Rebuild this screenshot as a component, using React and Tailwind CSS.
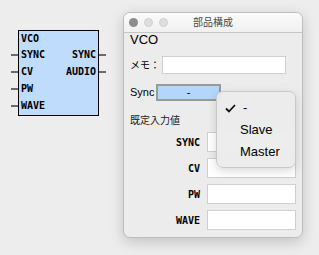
import React from "react";

const mono = { fontFamily: '"DejaVu Sans Mono", monospace' };

function Pin({ side }) {
  return (
    <div
      className={
        "absolute top-1/2 h-[2px] w-[7px] -translate-y-1/2 bg-[#6b6b6b] " +
        (side === "left" ? "left-[-8px]" : "right-[-8px]")
      }
    />
  );
}

function BlockRow({ left, right }) {
  return (
    <div className="relative flex h-[17px] items-center justify-between px-[2px] leading-[17px]">
      {left ? <Pin side="left" /> : null}
      <span>{left}</span>
      <span>{right}</span>
      {right ? <Pin side="right" /> : null}
    </div>
  );
}

function Field({ label }) {
  return (
    <div className="flex h-[20px] items-center">
      <div
        className="w-[77px] pr-[7px] text-right text-[10px] font-bold text-black"
        style={mono}
      >
        {label}
      </div>
      <div className="h-[20px] w-[89px] border border-[#cfcfcf] bg-white" />
    </div>
  );
}

export default function App() {
  return (
    <div
      className="relative h-[255px] w-[319px] overflow-hidden bg-[#ededed]"
      style={{ fontFamily: '"Liberation Sans", "Noto Sans CJK JP", sans-serif' }}
    >
      {/* diagram block */}
      <div
        className="absolute left-[18px] top-[30px] flex h-[86px] w-[81px] flex-col border border-black bg-[#c0dcfd] text-[10px] font-bold text-black"
        style={mono}
      >
        <div className="h-[15px] px-[2px] leading-[15px]">VCO</div>
        <BlockRow left="SYNC" right="SYNC" />
        <BlockRow left="CV" right="AUDIO" />
        <BlockRow left="PW" />
        <BlockRow left="WAVE" />
      </div>

      {/* window */}
      <div className="absolute left-[123px] top-[12px] flex h-[226px] w-[180px] flex-col overflow-hidden rounded-[7px] border border-[#bdbdbd] bg-[#ececec] shadow-[0_4px_14px_rgba(0,0,0,0.18)]">
        <div className="relative flex h-[20px] shrink-0 items-center justify-center border-b border-[#c6c6c6] bg-gradient-to-b from-[#fbfbfb] to-[#f0f0f0]">
          <div className="absolute left-[5px] top-[5px] flex gap-[6px]">
            <div className="h-[9px] w-[9px] rounded-full bg-[#8d8d8d]" />
            <div className="h-[9px] w-[9px] rounded-full border border-[#cfcfcf] bg-[#dedede]" />
            <div className="h-[9px] w-[9px] rounded-full border border-[#cfcfcf] bg-[#dedede]" />
          </div>
          <span className="text-[10px] text-[#4a4a4a]">部品構成</span>
        </div>

        <div className="flex flex-col pl-[6px]">
          <div className="h-[14px] text-[13px] leading-[14px] text-black">VCO</div>

          <div className="mt-[9px] flex h-[18px] items-center">
            <span className="w-[32px] text-[10px] text-black">メモ：</span>
            <div className="h-[18px] w-[124px] border border-[#cfcfcf] bg-white" />
          </div>

          <div className="mt-[10px] flex h-[17px] items-center">
            <span className="w-[26px] text-[11px] text-black">Sync</span>
            <div className="flex h-[17px] w-[65px] items-center justify-center border-2 border-[#9a9a9a] bg-[#b3d6fd] text-[11px] text-black">
              -
            </div>
          </div>

          <div className="mt-[13px] h-[14px] text-[10px] leading-[14px] text-[#222]">
            既定入力値
          </div>

          <div className="mt-[4px] flex flex-col gap-[6px]">
            <Field label="SYNC" />
            <Field label="CV" />
            <Field label="PW" />
            <Field label="WAVE" />
          </div>
        </div>
      </div>

      {/* popup menu */}
      <div className="absolute left-[216px] top-[91px] flex h-[77px] w-[80px] flex-col rounded-[7px] border border-[#c9c9c9] bg-[#ececec]/95 pt-[5px] text-[13px] text-black shadow-[0_3px_10px_rgba(0,0,0,0.15)]">
        <div className="relative flex h-[22px] items-center pl-[26px]">
          <svg
            className="absolute left-[8px] top-[7px]"
            width="11"
            height="9"
            viewBox="0 0 11 9"
            fill="none"
          >
            <path d="M1 4.5 L4 7.5 L10 1" stroke="#111" strokeWidth="1.8" />
          </svg>
          -
        </div>
        <div className="flex h-[22px] items-center pl-[23px]">Slave</div>
        <div className="flex h-[22px] items-center pl-[23px]">Master</div>
      </div>
    </div>
  );
}
